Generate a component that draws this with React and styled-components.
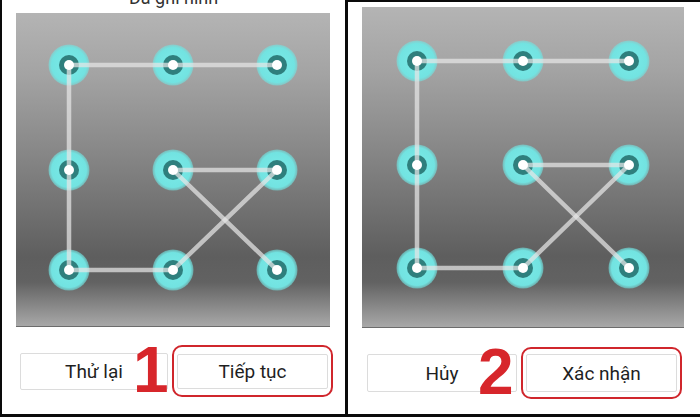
import * as React from "react";
import styled, { createGlobalStyle } from "styled-components";

const GlobalStyle = createGlobalStyle`
  html, body {
    margin: 0;
    padding: 0;
    background: #ffffff;
  }
  body {
    font-family: Roboto, "Noto Sans", "Liberation Sans", sans-serif;
  }
`;

const Frame = styled.div`
  width: 700px;
  height: 417px;
  display: flex;
  overflow: hidden;
  background: #ffffff;
`;

const Panel = styled.div`
  position: relative;
  box-sizing: border-box;
  width: ${(p) => p.$width}px;
  height: 417px;
  display: flex;
  flex-direction: column;
  background: #ffffff;
  border-left: ${(p) => (p.$left ? "2px solid #0a0a0a" : "none")};
  border-top: ${(p) => (p.$top ? "2px solid #0a0a0a" : "none")};
  border-bottom: 3px solid #0a0a0a;
  overflow: hidden;
`;

const Divider = styled.div`
  width: 3px;
  height: 417px;
  flex-shrink: 0;
  background: #0a0a0a;
`;

const Title = styled.div`
  height: 18px;
  margin-top: -11px;
  font-size: 18px;
  line-height: 18px;
  text-align: center;
  color: #333333;
`;

const Pad = styled.div`
  width: ${(p) => p.$w}px;
  height: ${(p) => p.$h}px;
  margin-top: ${(p) => p.$mt}px;
  margin-left: ${(p) => p.$ml}px;
  box-sizing: border-box;
  border-bottom: 1px solid #6c6c6c;
  background: linear-gradient(
    to bottom,
    #b4b4b4 0%,
    #a3a3a3 20%,
    #8a8a8a 42%,
    #727272 62%,
    #5e5e5e 78%,
    #626262 86%,
    #8a8a8a 94%,
    #a8a8a8 100%
  );
  svg {
    display: block;
  }
`;

const ButtonRow = styled.div`
  position: relative;
  display: flex;
  align-items: center;
  gap: 4px;
  margin-top: ${(p) => p.$mt}px;
  padding-left: ${(p) => p.$pl}px;
`;

const Button = styled.div`
  box-sizing: border-box;
  width: ${(p) => p.$w}px;
  height: ${(p) => p.$h}px;
  display: flex;
  align-items: center;
  justify-content: center;
  background: #ffffff;
  border: 1px solid #dcdcdc;
  border-radius: 2px;
  font-size: 19px;
  color: #1f1f1f;
`;

const Highlight = styled.div`
  box-sizing: border-box;
  width: 161px;
  height: 52px;
  padding: 0 3px;
  display: flex;
  align-items: center;
  border: 2.5px solid #d0262c;
  border-radius: 10px;
`;

const StepNumber = styled.div`
  position: absolute;
  left: ${(p) => p.$x}px;
  top: ${(p) => p.$y}px;
  font-family: "Liberation Sans", Arial, sans-serif;
  font-weight: 700;
  font-size: 64px;
  line-height: 64px;
  color: #d7262b;
`;

const segments = [
  [[0, 0], [0, 1]],
  [[0, 1], [0, 2]],
  [[0, 0], [1, 0]],
  [[1, 0], [2, 0]],
  [[2, 0], [2, 1]],
  [[2, 1], [1, 2]],
  [[1, 2], [1, 1]],
  [[1, 1], [2, 2]],
];

const PatternGrid = ({ w, h, xs, ys }) => {
  const pt = ([r, c]) => [xs[c], ys[r]];
  const dots = [];
  ys.forEach((y, r) => xs.forEach((x, c) => dots.push([x, y, `${r}-${c}`])));
  return (
    <svg width={w} height={h} viewBox={`0 0 ${w} ${h}`}>
      <defs>
        <radialGradient id="glow">
          <stop offset="0%" stopColor="#7beae8" />
          <stop offset="85%" stopColor="#72e3e1" />
          <stop offset="100%" stopColor="#72e3e1" stopOpacity="0.55" />
        </radialGradient>
      </defs>
      {dots.map(([x, y, k]) => (
        <circle key={"o" + k} cx={x} cy={y} r="20.5" fill="url(#glow)" />
      ))}
      {dots.map(([x, y, k]) => (
        <circle key={"i" + k} cx={x} cy={y} r="10" fill="#2f7f7d" />
      ))}
      {segments.map(([a, b], i) => {
        const [x1, y1] = pt(a);
        const [x2, y2] = pt(b);
        return (
          <line
            key={i}
            x1={x1}
            y1={y1}
            x2={x2}
            y2={y2}
            stroke="#e6e6e6"
            strokeOpacity="0.72"
            strokeWidth="4.5"
            strokeLinecap="round"
          />
        );
      })}
      {dots.map(([x, y, k]) => (
        <circle key={"c" + k} cx={x} cy={y} r="5" fill="#ffffff" />
      ))}
    </svg>
  );
};

export default function App() {
  return (
    <Frame>
      <GlobalStyle />
      <Panel $width={345} $left>
        <Title>Đã ghi hình</Title>
        <Pad $w={314} $h={314} $mt={6} $ml={14}>
          <PatternGrid w={314} h={314} xs={[53, 157, 261]} ys={[52, 157, 257]} />
        </Pad>
        <ButtonRow $mt={18} $pl={18}>
          <Button $w={148} $h={37}>Thử lại</Button>
          <Highlight>
            <Button $w={151} $h={35}>Tiếp tục</Button>
          </Highlight>
          <StepNumber $x={131} $y={-7}>1</StepNumber>
        </ButtonRow>
      </Panel>
      <Divider />
      <Panel $width={352} $top>
        <Pad $w={322} $h={321} $mt={5} $ml={14}>
          <PatternGrid w={322} h={321} xs={[55, 161, 267]} ys={[54, 158, 261]} />
        </Pad>
        <ButtonRow $mt={19} $pl={19}>
          <Button $w={150} $h={38}>Hủy</Button>
          <Highlight>
            <Button $w={151} $h={38}>Xác nhận</Button>
          </Highlight>
          <StepNumber $x={130} $y={-7}>2</StepNumber>
        </ButtonRow>
      </Panel>
    </Frame>
  );
}
